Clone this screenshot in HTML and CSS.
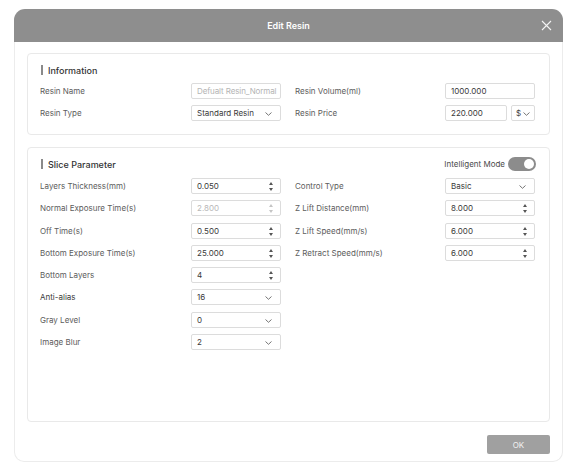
FILE: index.html
```html
<!DOCTYPE html>
<html lang="en">
<head>
  <meta charset="UTF-8">
  <title>Edit Resin</title>
  <link rel="stylesheet" href="styles.css">
</head>
<body>

<div class="dialog">
  <div class="dialog-head">
    <span class="dialog-title">Edit Resin</span>
    <svg class="close" width="11" height="11" viewBox="0 0 11 11"><path d="M1 1L10 10M10 1L1 10" stroke="#f4f4f4" stroke-width="1.1" fill="none"/></svg>
  </div>

  <div class="dialog-body">
    <div class="panel info">
      <div class="panel-title"><span class="bar"></span>Information</div>
      <div class="cols">
        <div class="col">
          <span class="lbl">Resin Name</span>
          <div class="field muted right-text">Defualt Resin_Normal</div>
          <span class="lbl">Resin Type</span>
          <div class="field select">Standard Resin
            <svg class="chev" width="7" height="4" viewBox="0 0 7 4"><path d="M0.5 0.5L3.5 3.3L6.5 0.5" stroke="#666" fill="none" stroke-width="0.9"/></svg>
          </div>
        </div>
        <div class="col col-right">
          <span class="lbl">Resin Volume(ml)</span>
          <div class="field">1000.000</div>
          <span class="lbl">Resin Price</span>
          <div class="price">
            <div class="field">220.000</div>
            <div class="field select currency">$
              <svg class="chev" width="7" height="4" viewBox="0 0 7 4"><path d="M0.5 0.5L3.5 3.3L6.5 0.5" stroke="#666" fill="none" stroke-width="0.9"/></svg>
            </div>
          </div>
        </div>
      </div>
    </div>

    <div class="panel slice">
      <div class="panel-title">
        <span class="bar"></span>Slice Parameter
        <span class="mode">Intelligent Mode <span class="toggle"><span class="knob"></span></span></span>
      </div>
      <div class="cols">
        <div class="col">
          <span class="lbl">Layers Thickness(mm)</span>
          <div class="field spin">0.050<span class="arrows"></span></div>
          <span class="lbl">Normal Exposure Time(s)</span>
          <div class="field spin disabled">2.800<span class="arrows"></span></div>
          <span class="lbl">Off Time(s)</span>
          <div class="field spin">0.500<span class="arrows"></span></div>
          <span class="lbl">Bottom Exposure Time(s)</span>
          <div class="field spin">25.000<span class="arrows"></span></div>
          <span class="lbl">Bottom Layers</span>
          <div class="field spin">4<span class="arrows"></span></div>
          <span class="lbl dark">Anti-alias</span>
          <div class="field select">16
            <svg class="chev" width="7" height="4" viewBox="0 0 7 4"><path d="M0.5 0.5L3.5 3.3L6.5 0.5" stroke="#666" fill="none" stroke-width="0.9"/></svg>
          </div>
          <span class="lbl">Gray Level</span>
          <div class="field select">0
            <svg class="chev" width="7" height="4" viewBox="0 0 7 4"><path d="M0.5 0.5L3.5 3.3L6.5 0.5" stroke="#666" fill="none" stroke-width="0.9"/></svg>
          </div>
          <span class="lbl">Image Blur</span>
          <div class="field select">2
            <svg class="chev" width="7" height="4" viewBox="0 0 7 4"><path d="M0.5 0.5L3.5 3.3L6.5 0.5" stroke="#666" fill="none" stroke-width="0.9"/></svg>
          </div>
        </div>
        <div class="col col-right">
          <span class="lbl">Control Type</span>
          <div class="field select">Basic
            <svg class="chev" width="7" height="4" viewBox="0 0 7 4"><path d="M0.5 0.5L3.5 3.3L6.5 0.5" stroke="#666" fill="none" stroke-width="0.9"/></svg>
          </div>
          <span class="lbl">Z Lift Distance(mm)</span>
          <div class="field spin">8.000<span class="arrows"></span></div>
          <span class="lbl">Z Lift Speed(mm/s)</span>
          <div class="field spin">6.000<span class="arrows"></span></div>
          <span class="lbl">Z Retract Speed(mm/s)</span>
          <div class="field spin">6.000<span class="arrows"></span></div>
        </div>
      </div>
    </div>

    <div class="footer">
      <button class="ok">OK</button>
    </div>
  </div>
</div>

</body>
</html>
```

FILE: styles.css
```css
body { margin: 0; background: #fff; font-family: Inter, "Liberation Sans", sans-serif; color: #3a3a3a; }

.dialog { width: 549px; margin: 9px 0 0 14px; }
.dialog-head { height: 33px; background: #8e8e8e; border-radius: 11px 11px 0 0; display: flex; align-items: center; justify-content: center; position: relative; }
.dialog-title { color: #fff; font-size: 9px; font-weight: 600; }
.close { position: absolute; right: 11px; top: 11px; }
.dialog-body { border: 1px solid #ececec; border-top: none; border-radius: 0 0 10px 10px; padding: 11px 12px 7px 12px; height: 420px; box-sizing: border-box; display: flex; flex-direction: column; gap: 12px; }

.panel { border: 1px solid #e9e9e9; border-radius: 4px; padding: 7px 13px 13px 12px; }
.panel-title { height: 18px; display: flex; align-items: center; font-size: 9px; font-weight: 500; color: #333; }
.bar { width: 2px; height: 10px; background: #8a8a8a; margin: 0 5px 0 1px; }

.cols { display: flex; }
.col { display: grid; grid-template-columns: 151px 90px; grid-auto-rows: 16px; row-gap: 6px; align-items: center; }
.col-right { grid-template-columns: 150px 90px; margin-left: 14px; }
.info .cols { margin-top: 4px; }
.slice { padding-top: 7px; flex: 1; }
.slice .cols { margin-top: 5px; }
.slice .col { row-gap: 6.3px; }

.lbl { font-size: 8px; color: #5c5c5c; }
.lbl.dark { color: #3a3a3a; }

.field { height: 16px; box-sizing: border-box; border: 1px solid #dcdcdc; border-radius: 2px; font-size: 8px; color: #3a3a3a; padding-left: 5px; display: flex; align-items: center; position: relative; white-space: nowrap; overflow: hidden; }
.field.muted { color: #b4b4b4; }
.field.right-text { padding-left: 5px; letter-spacing: -0.1px; }
.field.disabled { color: #b8b8b8; }
.chev { position: absolute; right: 8px; top: 6px; }

.arrows { position: absolute; right: 6px; top: 3px; width: 5px; height: 9px; }
.arrows::before, .arrows::after { content: ""; position: absolute; left: 0; border-left: 2.5px solid transparent; border-right: 2.5px solid transparent; }
.arrows::before { top: 0; border-bottom: 3px solid #555; }
.arrows::after { bottom: 0; border-top: 3px solid #555; }
.disabled .arrows::before { border-bottom-color: #c4c4c4; }
.disabled .arrows::after { border-top-color: #c4c4c4; }

.price { display: flex; gap: 4px; }
.price .field:first-child { width: 62px; }
.currency { width: 24px; padding-left: 4px; }
.currency .chev { right: 4px; }

.mode { margin-left: auto; display: flex; align-items: center; gap: 3px; font-size: 8px; font-weight: 400; color: #4a4a4a; }
.toggle { width: 28px; height: 14px; border-radius: 7px; background: #8c8c8c; position: relative; }
.knob { position: absolute; right: 2px; top: 2px; width: 10px; height: 10px; border-radius: 50%; background: #fff; }

.footer { display: flex; justify-content: flex-end; padding-top: 1px; }
.ok { width: 63px; height: 19px; border: none; border-radius: 2px; background: #a0a0a0; color: #f2f2f2; font-family: Inter, "Liberation Sans", sans-serif; font-size: 8px; }
```
